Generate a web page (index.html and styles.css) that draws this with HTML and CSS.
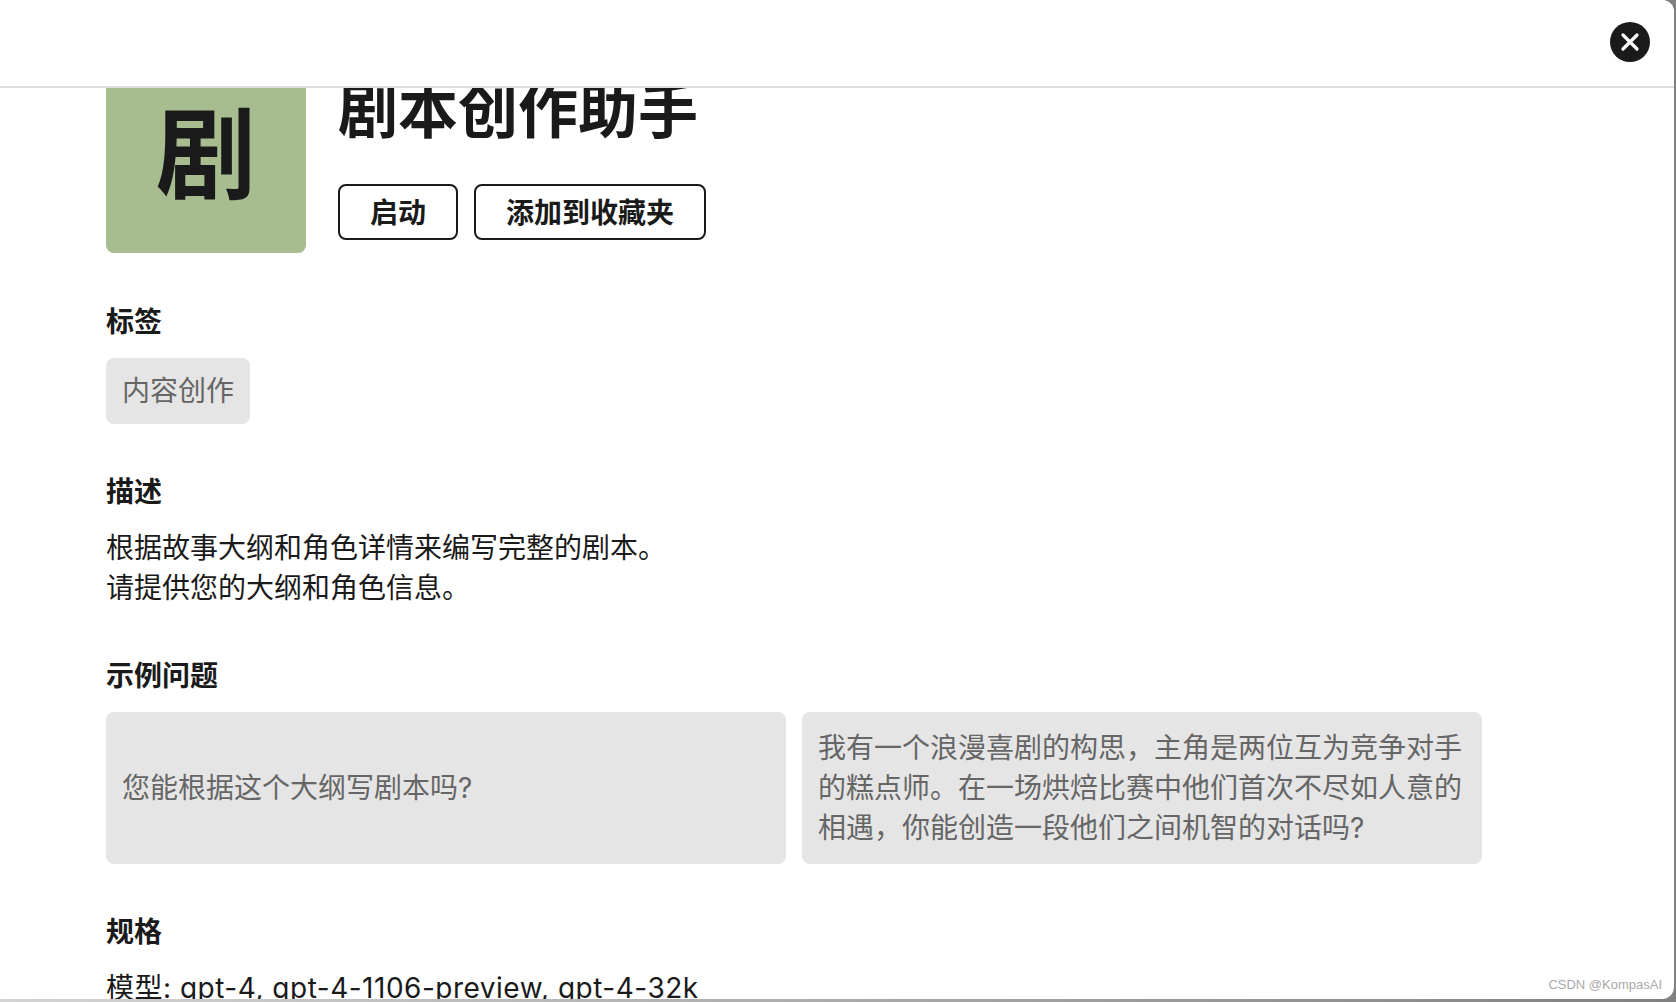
FILE: index.html
```html
<!DOCTYPE html>
<html lang="zh-CN">
<head>
    <meta charset="UTF-8">
    <title>剧本创作助手</title>
    <link rel="stylesheet" href="styles.css">
</head>
<body>
    <div class="modal">
        <header class="modal-header">
            <button class="close-btn" aria-label="关闭">
                <svg width="40" height="40" viewBox="0 0 40 40">
                    <path d="M13 13L27 27M27 13L13 27" stroke="#fff" stroke-width="3.2" stroke-linecap="round"/>
                </svg>
            </button>
        </header>

        <div class="modal-body">
            <div class="content">
                <div class="intro">
                    <div class="avatar">剧</div>
                    <div class="intro-main">
                        <h1>剧本创作助手</h1>
                        <div class="actions">
                            <button class="btn">启动</button>
                            <button class="btn">添加到收藏夹</button>
                        </div>
                    </div>
                </div>

                <section>
                    <h2>标签</h2>
                    <span class="chip">内容创作</span>
                </section>

                <section>
                    <h2>描述</h2>
                    <p>根据故事大纲和角色详情来编写完整的剧本。<br>请提供您的大纲和角色信息。</p>
                </section>

                <section>
                    <h2>示例问题</h2>
                    <div class="examples">
                        <div class="chip example">您能根据这个大纲写剧本吗?</div>
                        <div class="chip example">我有一个浪漫喜剧的构思，主角是两位互为竞争对手的糕点师。在一场烘焙比赛中他们首次不尽如人意的相遇，你能创造一段他们之间机智的对话吗?</div>
                    </div>
                </section>

                <section>
                    <h2>规格</h2>
                    <p class="specs">模型: gpt-4, gpt-4-1106-preview, gpt-4-32k</p>
                </section>
            </div>
        </div>

        <span class="watermark">CSDN @KompasAI</span>
    </div>
</body>
</html>
```

FILE: styles.css
```css
* {
    box-sizing: border-box;
}

html, body {
    height: 100%;
}

body {
    margin: 0;
    overflow: hidden;
    background: linear-gradient(to right, #d4d4d4, #808080);
    font-family: 'Inter', 'Noto Sans CJK SC', sans-serif;
    font-size: 28px;
    line-height: 40px;
    color: #1a1a1a;
}

.modal {
    position: relative;
    display: flex;
    flex-direction: column;
    height: 999px;
    width: 1674px;
    background-color: #fff;
    border-radius: 0 12px 12px 0;
    overflow: hidden;
}

.modal-header {
    flex: none;
    display: flex;
    justify-content: flex-end;
    height: 88px;
    padding: 22px 24px 0 0;
    background-color: #fff;
    border-bottom: 2px solid #ddd;
    position: relative;
    z-index: 1;
}

.close-btn {
    width: 40px;
    height: 40px;
    padding: 0;
    border: none;
    border-radius: 50%;
    background-color: #1a1a1a;
    cursor: pointer;
}

.close-btn svg {
    display: block;
}

.modal-body {
    flex: 1;
    min-height: 0;
    overflow: hidden;
}

.content {
    margin-top: -35px;
    padding: 0 106px;
}

.intro {
    display: flex;
    gap: 32px;
}

.avatar {
    flex: none;
    display: flex;
    align-items: center;
    justify-content: center;
    width: 200px;
    height: 200px;
    padding-top: 4px;
    border-radius: 8px;
    background-color: #a7bd8f;
    font-size: 100px;
    font-weight: 700;
}

.intro-main {
    display: flex;
    flex-direction: column;
    justify-content: space-between;
    padding-bottom: 13px;
}

h1 {
    margin: -2px 0 0;
    font-size: 60px;
    line-height: 120px;
    font-weight: 700;
}

.actions {
    display: flex;
    gap: 16px;
}

.btn {
    height: 56px;
    padding: 2px 30px 0;
    border: 2px solid #1a1a1a;
    border-radius: 8px;
    background-color: #fff;
    color: #1a1a1a;
    font: inherit;
    font-weight: 700;
    cursor: pointer;
}

h2 {
    margin: 0 0 16px;
    font-size: 28px;
    line-height: 40px;
    font-weight: 700;
}

p {
    margin: 0;
}

section {
    margin-top: 48px;
}

.intro + section {
    margin-top: 49px;
}

.specs {
    letter-spacing: 0.5px;
}

.chip {
    display: block;
    width: fit-content;
    padding: 13px 16px;
    border-radius: 8px;
    background-color: #e5e5e5;
    color: #666;
}

.examples {
    display: flex;
    gap: 16px;
    width: 1376px;
}

.example {
    flex: 1;
    display: flex;
    align-items: center;
    padding: 16px;
}

.watermark {
    position: absolute;
    right: 12px;
    bottom: 5px;
    font-family: 'Liberation Sans', sans-serif;
    font-size: 13px;
    line-height: 18px;
    color: #aaa;
}
```
